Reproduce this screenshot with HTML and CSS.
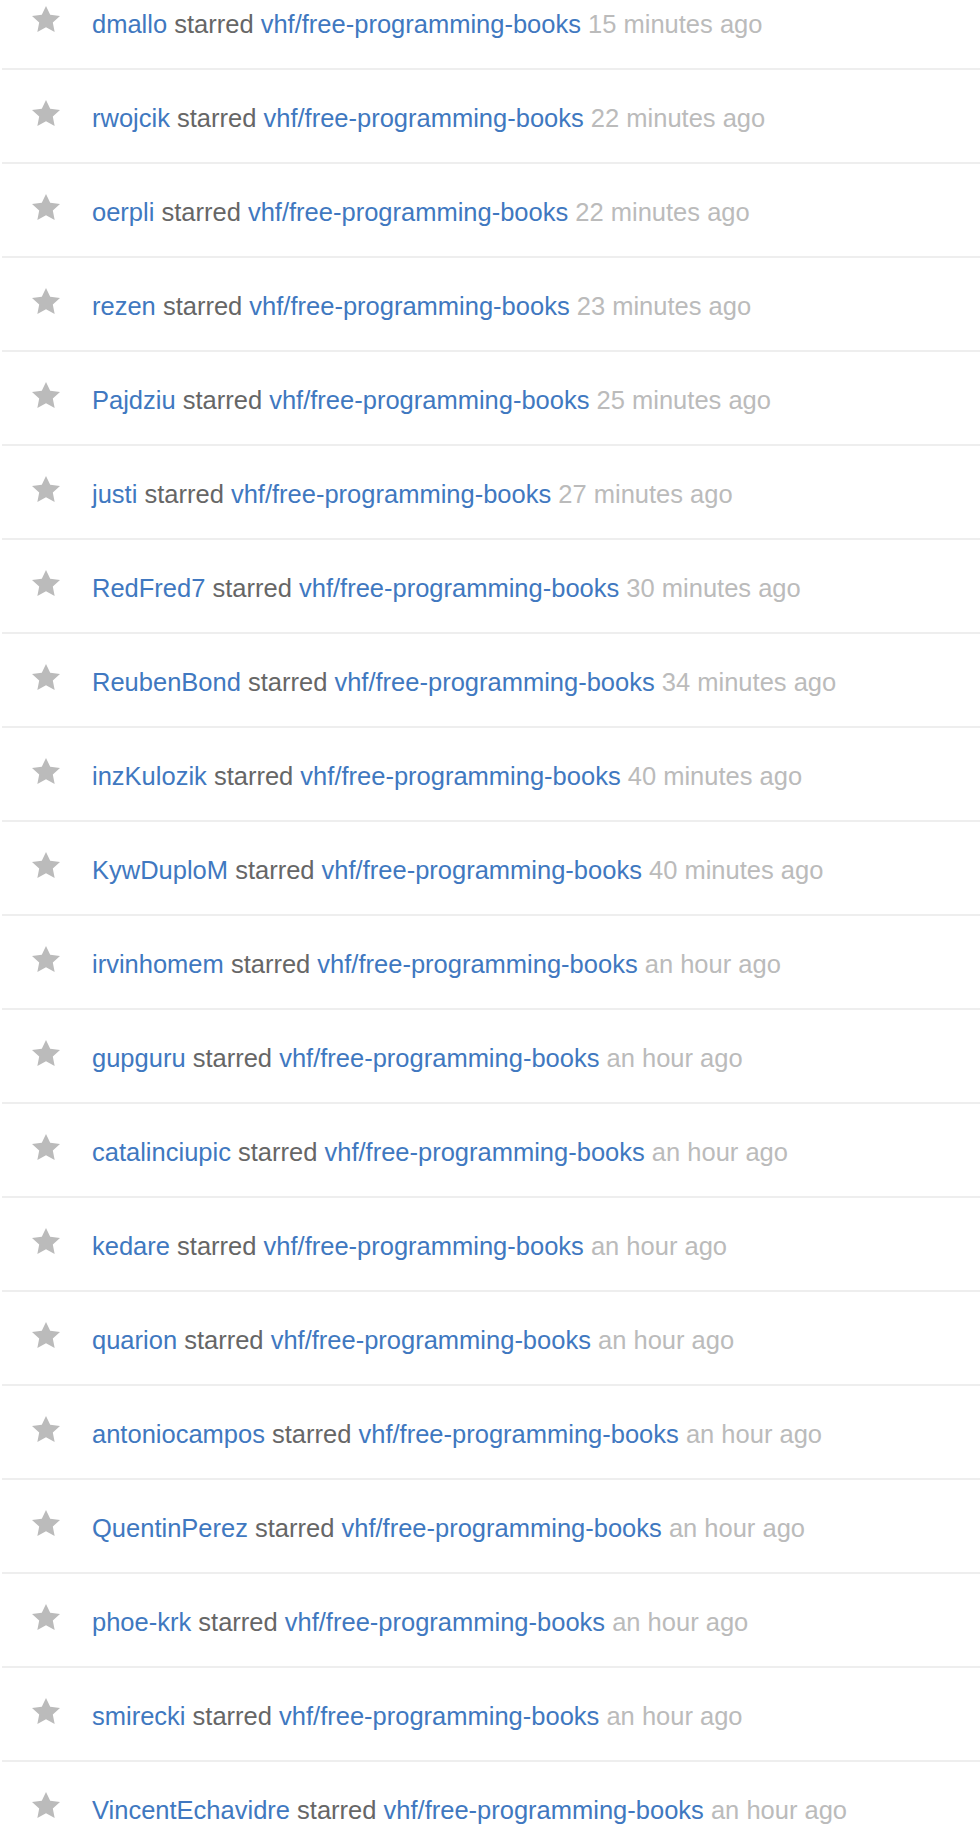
FILE: index.html
```html
<!DOCTYPE html>
<html>
<head>
<meta charset="utf-8">
<link rel="stylesheet" href="styles.css">
</head>
<body>
<ul class="feed">
  <li class="item"><svg class="star" viewBox="0 0 14 16"><path d="M14 6l-4.9-.64L7 1 4.9 5.36 0 6l3.6 3.26L2.67 14 7 11.67 11.33 14l-.93-4.74L14 6z"/></svg><div class="text"><a class="link">dmallo</a> starred <a class="link">vhf/free-programming-books</a> <span class="time">15 minutes ago</span></div></li>
  <li class="item"><svg class="star" viewBox="0 0 14 16"><path d="M14 6l-4.9-.64L7 1 4.9 5.36 0 6l3.6 3.26L2.67 14 7 11.67 11.33 14l-.93-4.74L14 6z"/></svg><div class="text"><a class="link">rwojcik</a> starred <a class="link">vhf/free-programming-books</a> <span class="time">22 minutes ago</span></div></li>
  <li class="item"><svg class="star" viewBox="0 0 14 16"><path d="M14 6l-4.9-.64L7 1 4.9 5.36 0 6l3.6 3.26L2.67 14 7 11.67 11.33 14l-.93-4.74L14 6z"/></svg><div class="text"><a class="link">oerpli</a> starred <a class="link">vhf/free-programming-books</a> <span class="time">22 minutes ago</span></div></li>
  <li class="item"><svg class="star" viewBox="0 0 14 16"><path d="M14 6l-4.9-.64L7 1 4.9 5.36 0 6l3.6 3.26L2.67 14 7 11.67 11.33 14l-.93-4.74L14 6z"/></svg><div class="text"><a class="link">rezen</a> starred <a class="link">vhf/free-programming-books</a> <span class="time">23 minutes ago</span></div></li>
  <li class="item"><svg class="star" viewBox="0 0 14 16"><path d="M14 6l-4.9-.64L7 1 4.9 5.36 0 6l3.6 3.26L2.67 14 7 11.67 11.33 14l-.93-4.74L14 6z"/></svg><div class="text"><a class="link">Pajdziu</a> starred <a class="link">vhf/free-programming-books</a> <span class="time">25 minutes ago</span></div></li>
  <li class="item"><svg class="star" viewBox="0 0 14 16"><path d="M14 6l-4.9-.64L7 1 4.9 5.36 0 6l3.6 3.26L2.67 14 7 11.67 11.33 14l-.93-4.74L14 6z"/></svg><div class="text"><a class="link">justi</a> starred <a class="link">vhf/free-programming-books</a> <span class="time">27 minutes ago</span></div></li>
  <li class="item"><svg class="star" viewBox="0 0 14 16"><path d="M14 6l-4.9-.64L7 1 4.9 5.36 0 6l3.6 3.26L2.67 14 7 11.67 11.33 14l-.93-4.74L14 6z"/></svg><div class="text"><a class="link">RedFred7</a> starred <a class="link">vhf/free-programming-books</a> <span class="time">30 minutes ago</span></div></li>
  <li class="item"><svg class="star" viewBox="0 0 14 16"><path d="M14 6l-4.9-.64L7 1 4.9 5.36 0 6l3.6 3.26L2.67 14 7 11.67 11.33 14l-.93-4.74L14 6z"/></svg><div class="text"><a class="link">ReubenBond</a> starred <a class="link">vhf/free-programming-books</a> <span class="time">34 minutes ago</span></div></li>
  <li class="item"><svg class="star" viewBox="0 0 14 16"><path d="M14 6l-4.9-.64L7 1 4.9 5.36 0 6l3.6 3.26L2.67 14 7 11.67 11.33 14l-.93-4.74L14 6z"/></svg><div class="text"><a class="link">inzKulozik</a> starred <a class="link">vhf/free-programming-books</a> <span class="time">40 minutes ago</span></div></li>
  <li class="item"><svg class="star" viewBox="0 0 14 16"><path d="M14 6l-4.9-.64L7 1 4.9 5.36 0 6l3.6 3.26L2.67 14 7 11.67 11.33 14l-.93-4.74L14 6z"/></svg><div class="text"><a class="link">KywDuploM</a> starred <a class="link">vhf/free-programming-books</a> <span class="time">40 minutes ago</span></div></li>
  <li class="item"><svg class="star" viewBox="0 0 14 16"><path d="M14 6l-4.9-.64L7 1 4.9 5.36 0 6l3.6 3.26L2.67 14 7 11.67 11.33 14l-.93-4.74L14 6z"/></svg><div class="text"><a class="link">irvinhomem</a> starred <a class="link">vhf/free-programming-books</a> <span class="time">an hour ago</span></div></li>
  <li class="item"><svg class="star" viewBox="0 0 14 16"><path d="M14 6l-4.9-.64L7 1 4.9 5.36 0 6l3.6 3.26L2.67 14 7 11.67 11.33 14l-.93-4.74L14 6z"/></svg><div class="text"><a class="link">gupguru</a> starred <a class="link">vhf/free-programming-books</a> <span class="time">an hour ago</span></div></li>
  <li class="item"><svg class="star" viewBox="0 0 14 16"><path d="M14 6l-4.9-.64L7 1 4.9 5.36 0 6l3.6 3.26L2.67 14 7 11.67 11.33 14l-.93-4.74L14 6z"/></svg><div class="text"><a class="link">catalinciupic</a> starred <a class="link">vhf/free-programming-books</a> <span class="time">an hour ago</span></div></li>
  <li class="item"><svg class="star" viewBox="0 0 14 16"><path d="M14 6l-4.9-.64L7 1 4.9 5.36 0 6l3.6 3.26L2.67 14 7 11.67 11.33 14l-.93-4.74L14 6z"/></svg><div class="text"><a class="link">kedare</a> starred <a class="link">vhf/free-programming-books</a> <span class="time">an hour ago</span></div></li>
  <li class="item"><svg class="star" viewBox="0 0 14 16"><path d="M14 6l-4.9-.64L7 1 4.9 5.36 0 6l3.6 3.26L2.67 14 7 11.67 11.33 14l-.93-4.74L14 6z"/></svg><div class="text"><a class="link">quarion</a> starred <a class="link">vhf/free-programming-books</a> <span class="time">an hour ago</span></div></li>
  <li class="item"><svg class="star" viewBox="0 0 14 16"><path d="M14 6l-4.9-.64L7 1 4.9 5.36 0 6l3.6 3.26L2.67 14 7 11.67 11.33 14l-.93-4.74L14 6z"/></svg><div class="text"><a class="link">antoniocampos</a> starred <a class="link">vhf/free-programming-books</a> <span class="time">an hour ago</span></div></li>
  <li class="item"><svg class="star" viewBox="0 0 14 16"><path d="M14 6l-4.9-.64L7 1 4.9 5.36 0 6l3.6 3.26L2.67 14 7 11.67 11.33 14l-.93-4.74L14 6z"/></svg><div class="text"><a class="link">QuentinPerez</a> starred <a class="link">vhf/free-programming-books</a> <span class="time">an hour ago</span></div></li>
  <li class="item"><svg class="star" viewBox="0 0 14 16"><path d="M14 6l-4.9-.64L7 1 4.9 5.36 0 6l3.6 3.26L2.67 14 7 11.67 11.33 14l-.93-4.74L14 6z"/></svg><div class="text"><a class="link">phoe-krk</a> starred <a class="link">vhf/free-programming-books</a> <span class="time">an hour ago</span></div></li>
  <li class="item"><svg class="star" viewBox="0 0 14 16"><path d="M14 6l-4.9-.64L7 1 4.9 5.36 0 6l3.6 3.26L2.67 14 7 11.67 11.33 14l-.93-4.74L14 6z"/></svg><div class="text"><a class="link">smirecki</a> starred <a class="link">vhf/free-programming-books</a> <span class="time">an hour ago</span></div></li>
  <li class="item"><svg class="star" viewBox="0 0 14 16"><path d="M14 6l-4.9-.64L7 1 4.9 5.36 0 6l3.6 3.26L2.67 14 7 11.67 11.33 14l-.93-4.74L14 6z"/></svg><div class="text"><a class="link">VincentEchavidre</a> starred <a class="link">vhf/free-programming-books</a> <span class="time">an hour ago</span></div></li>
</ul>
</body>
</html>
```
FILE: styles.css
```css
html, body {
  margin: 0;
  padding: 0;
  background: #fff;
}
body {
  font-family: "Liberation Sans", Arial, Helvetica, sans-serif;
  font-size: 25.5px;
  color: #666;
  overflow: hidden;
}
.feed {
  list-style: none;
  margin: -24px 0 0 2px;
  padding: 0;
}
.item {
  display: flex;
  align-items: flex-start;
  box-sizing: border-box;
  height: 94px;
  padding: 28px 0 0 30px;
  border-bottom: 2px solid #eeeeee;
}
.star {
  flex: none;
  width: 28px;
  height: 32px;
  fill: #bbbbbb;
}
.text {
  margin-left: 32px;
  padding-top: 4.5px;
  line-height: 30px;
  white-space: nowrap;
}
.link {
  color: #4078c0;
  text-decoration: none;
}
.time {
  color: #bbbbbb;
}
```
